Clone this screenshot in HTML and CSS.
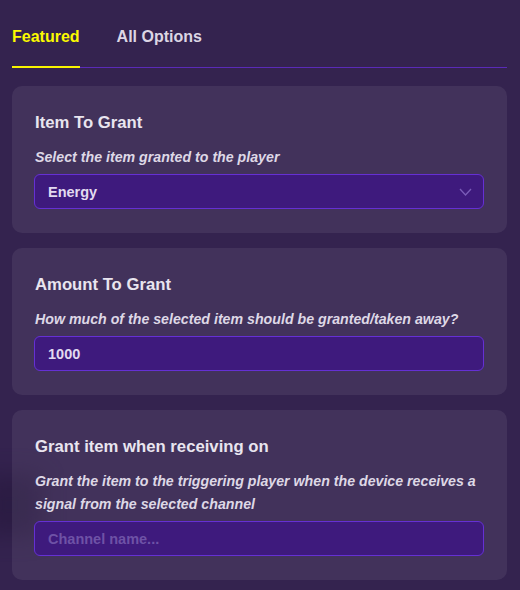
FILE: index.html
```html
<!DOCTYPE html>
<html>
<head>
<meta charset="utf-8">
<link rel="stylesheet" href="styles.css">
</head>
<body>
<div class="blob"></div>
<div class="page">
  <div class="tabs">
    <div class="tab active">Featured</div>
    <div class="tab">All Options</div>
  </div>
  <div class="cards">
    <div class="card">
      <div class="title">Item To Grant</div>
      <div class="desc">Select the item granted to the player</div>
      <div class="field select">
        <span class="value">Energy</span>
        <svg class="chev" width="13" height="8" viewBox="0 0 13 8"><path d="M1 1 L6.5 7 L12 1" fill="none" stroke="#7a5cb8" stroke-width="1.3"/></svg>
      </div>
    </div>
    <div class="card">
      <div class="title">Amount To Grant</div>
      <div class="desc">How much of the selected item should be granted/taken away?</div>
      <div class="field"><span class="value">1000</span></div>
    </div>
    <div class="card">
      <div class="title">Grant item when receiving on</div>
      <div class="desc">Grant the item to the triggering player when the device receives a signal from the selected channel</div>
      <div class="field"><span class="placeholder">Channel name...</span></div>
    </div>
  </div>
</div>
</body>
</html>
```
FILE: styles.css
```css
html, body {
  margin: 0;
  padding: 0;
  background: #34234f;
  width: 520px;
  height: 590px;
  overflow: hidden;
  font-family: "Liberation Sans", Arial, sans-serif;
}
.blob {
  position: absolute;
  left: -20px;
  top: 475px;
  width: 60px;
  height: 60px;
  background: #26173c;
  filter: blur(12px);
  opacity: 0.6;
}
.page {
  position: relative;
  padding: 27px 13px 0 12px;
}
.tabs {
  display: flex;
  gap: 37px;
  border-bottom: 1px solid #5a2ab8;
}
.tab {
  font-size: 16px;
  line-height: 20px;
  font-weight: bold;
  color: #dcd6e4;
  padding-bottom: 19px;
  border-bottom: 2px solid transparent;
  margin-bottom: -1px;
}
.tab.active {
  color: #fbfa00;
  border-bottom-color: #f8f400;
}
.cards {
  display: flex;
  flex-direction: column;
  gap: 15.5px;
  margin-top: 18px;
}
.card {
  background: rgba(255, 255, 255, 0.07);
  border-radius: 10px;
  padding: 26px 23px 23.5px;
}
.title {
  font-size: 16.7px;
  line-height: 22px;
  font-weight: bold;
  color: #e9e5ef;
}
.desc {
  margin-top: 12px;
  margin-bottom: 5px;
  font-size: 14.2px;
  line-height: 23px;
  font-weight: bold;
  font-style: italic;
  color: #ded8e6;
}
.field {
  height: 33px;
  box-sizing: content-box;
  border: 1px solid #6530d4;
  border-radius: 6px;
  background: #3e1a7d;
  display: flex;
  align-items: center;
  justify-content: space-between;
  padding: 0 11px 0 13px;
  margin-left: -1px;
}
.value {
  font-size: 14.5px;
  font-weight: bold;
  color: #e2daf0;
}
.placeholder {
  font-size: 14.5px;
  font-weight: bold;
  color: #6e52a6;
}
.chev {
  display: block;
}
```
